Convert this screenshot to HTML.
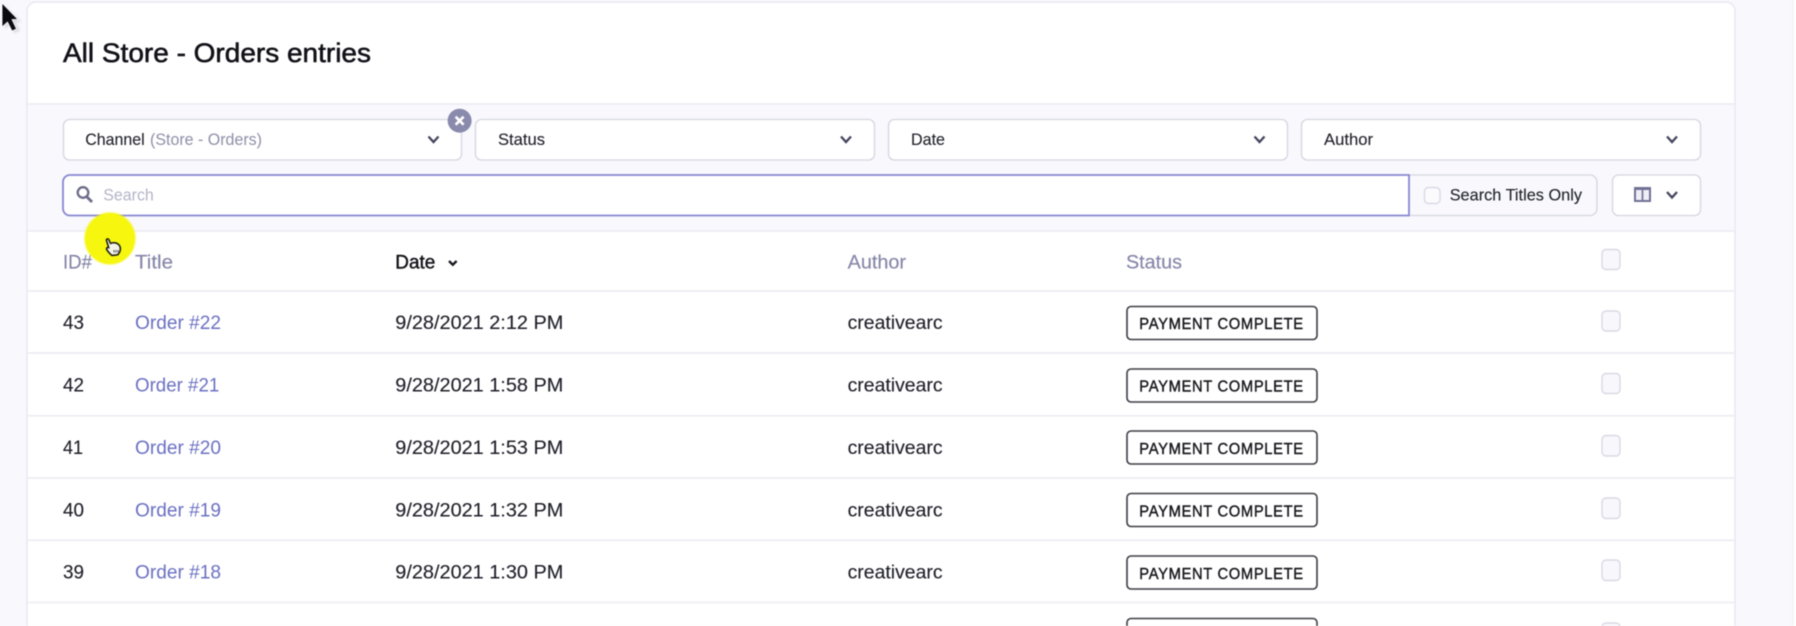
<!DOCTYPE html>
<html lang="en"><head><meta charset="utf-8"><title>All Store - Orders entries</title>
<style>
html,body{margin:0;padding:0;width:1796px;height:626px;overflow:hidden;background:#f9f9fd}
svg{display:block;filter:blur(.45px)}
text{font-family:"Liberation Sans",sans-serif;white-space:pre}
.t{font-size:19px;fill:#1e1e28;stroke:#1e1e28;stroke-width:.12px}
.l{font-size:19px;fill:#6b70c2}
.h{font-size:19px;fill:#8585a8;stroke:#8585a8;stroke-width:.15px}
.s{font-size:17px;fill:#20202a;stroke:#20202a;stroke-width:.1px}
.b{font-size:16px;fill:#17171c;stroke:#17171c;stroke-width:.4px;letter-spacing:.7px}
.bd{fill:#fff;stroke:#3c3c44;stroke-width:1.6}
.cb{fill:#f7f7fc;stroke:#d9d9e4;stroke-width:1.4}
.ln{stroke:#ebebf2;stroke-width:1.5}
.ch{fill:none;stroke:#45455f;stroke-width:2.300}
.sel{fill:#fff;stroke:#d5d5e0;stroke-width:1.300}
</style></head><body>
<svg width="1796" height="626" viewBox="0 0 1796 626" xmlns="http://www.w3.org/2000/svg">
<rect width="1796" height="626" fill="#f9f9fd"/>
<rect x="1793" width="3" height="626" fill="#fff"/>
<line x1="1793" y1="0" x2="1793" y2="626" stroke="#eeeef6"/>
<!-- card -->
<path d="M27 640V11a9 9 0 0 1 9-9H1726a9 9 0 0 1 9 9V640Z" fill="#fff" stroke="#e8e8f4" stroke-width="1.500"/>
<rect x="27.800" y="104" width="1706.500" height="127" fill="#f8f8fd"/>
<line class="ln" x1="27" y1="104" x2="1735" y2="104"/>
<line class="ln" x1="27" y1="231" x2="1735" y2="231"/>
<text x="63" y="62" font-size="27" fill="#111118" stroke="#111118" stroke-width=".55" textLength="308" lengthAdjust="spacingAndGlyphs">All Store - Orders entries</text>

<!-- selects -->
<rect class="sel" x="63.500" y="119.500" width="398" height="40.500" rx="6"/>
<rect class="sel" x="475.500" y="119.500" width="399" height="40.500" rx="6"/>
<rect class="sel" x="888.500" y="119.500" width="399" height="40.500" rx="6"/>
<rect class="sel" x="1301.500" y="119.500" width="399" height="40.500" rx="6"/>
<text class="s" x="85.300" y="145" textLength="59.400" lengthAdjust="spacingAndGlyphs">Channel</text>
<text x="150" y="145" font-size="17" fill="#8f8fa8" textLength="112" lengthAdjust="spacingAndGlyphs">(Store - Orders)</text>
<text class="s" x="498" y="145" textLength="47" lengthAdjust="spacingAndGlyphs">Status</text>
<text class="s" x="911" y="145" textLength="34" lengthAdjust="spacingAndGlyphs">Date</text>
<text class="s" x="1324" y="145" textLength="49" lengthAdjust="spacingAndGlyphs">Author</text>
<path class="ch" d="M428.500 136.500l5 5.500 5-5.500M841 136.500l5 5.500 5-5.500M1254.500 136.500l5 5.500 5-5.500M1667 136.500l5 5.500 5-5.500"/>
<circle cx="459.600" cy="120.700" r="12" fill="#8a8aad"/>
<path d="M455.600 116.700l8 8M463.600 116.700l-8 8" stroke="#fff" stroke-width="2.600" fill="none"/>

<!-- search row -->
<path d="M1409 175H1590a7 7 0 0 1 7 7v26.500a7 7 0 0 1-7 7H1409Z" fill="#f8f8fd" stroke="#d5d5e0" stroke-width="1.300"/>
<path d="M1409 175H70a7 7 0 0 0-7 7v26.500a7 7 0 0 0 7 7H1409Z" fill="#fff" stroke="#8787d2" stroke-width="1.800"/>
<circle cx="83" cy="192.500" r="5.300" fill="none" stroke="#6c6c88" stroke-width="2.300"/>
<path d="M87 197l5 5" stroke="#6c6c88" stroke-width="2.800" fill="none"/>
<text x="103.300" y="200.500" font-size="17" fill="#b4b4c8" textLength="50.500" lengthAdjust="spacingAndGlyphs">Search</text>
<rect class="cb" x="1424.500" y="187.500" width="15.500" height="16" rx="4" style="fill:#fbfbfe"/>
<text class="s" x="1449.700" y="200.500" textLength="132.300" lengthAdjust="spacingAndGlyphs">Search Titles Only</text>
<rect class="sel" x="1612.500" y="175" width="88" height="40.500" rx="6"/>
<rect x="1635" y="188" width="15" height="13" fill="#eeeef6" stroke="#717195" stroke-width="2"/>
<path d="M1642.500 188v13" stroke="#717195" stroke-width="1.700" fill="none"/>
<path d="M1634 188.500h17" stroke="#717195" stroke-width="3" fill="none"/>
<path class="ch" d="M1667 192l5 5.500 5-5.500"/>

<!-- table head -->
<line class="ln" x1="27" y1="291" x2="1735" y2="291"/>
<text class="h" x="63" y="268.500" textLength="29" lengthAdjust="spacingAndGlyphs">ID#</text>
<text class="h" x="135" y="268.500" textLength="38" lengthAdjust="spacingAndGlyphs">Title</text>
<text class="t" x="395.300" y="268.500" textLength="40" lengthAdjust="spacingAndGlyphs" style="stroke:#111118;fill:#111118;stroke-width:.4px">Date</text>
<path d="M449 261l3.800 3.800 3.800-3.800" fill="none" stroke="#15151c" stroke-width="2.300"/>
<text class="h" x="847.600" y="268.500" textLength="58.400" lengthAdjust="spacingAndGlyphs">Author</text>
<text class="h" x="1126" y="268.500" textLength="56" lengthAdjust="spacingAndGlyphs">Status</text>
<rect class="cb" x="1602" y="249.500" width="18" height="20" rx="4"/>

<!-- rows -->
<line class="ln" x1="27" y1="353" x2="1735" y2="353"/>
<line class="ln" x1="27" y1="415.700" x2="1735" y2="415.700"/>
<line class="ln" x1="27" y1="478" x2="1735" y2="478"/>
<line class="ln" x1="27" y1="540.300" x2="1735" y2="540.300"/>
<line class="ln" x1="27" y1="602.500" x2="1735" y2="602.500"/>

<text class="t" x="63" y="329" textLength="21" lengthAdjust="spacingAndGlyphs">43</text>
<text class="l" x="135" y="329" textLength="86" lengthAdjust="spacingAndGlyphs">Order #22</text>
<text class="t" x="395.300" y="329" textLength="168" lengthAdjust="spacingAndGlyphs">9/28/2021 2:12 PM</text>
<text class="t" x="847.600" y="329" textLength="95" lengthAdjust="spacingAndGlyphs">creativearc</text>
<rect class="bd" x="1127" y="306.500" width="190" height="33" rx="4"/>
<text class="b" x="1139.300" y="329" textLength="164.500" lengthAdjust="spacingAndGlyphs">PAYMENT COMPLETE</text>
<rect class="cb" x="1602" y="311" width="18" height="20" rx="4"/>

<text class="t" x="63" y="391.500" textLength="21" lengthAdjust="spacingAndGlyphs">42</text>
<text class="l" x="135" y="391.500" textLength="84.300" lengthAdjust="spacingAndGlyphs">Order #21</text>
<text class="t" x="395.300" y="391.500" textLength="168" lengthAdjust="spacingAndGlyphs">9/28/2021 1:58 PM</text>
<text class="t" x="847.600" y="391.500" textLength="95" lengthAdjust="spacingAndGlyphs">creativearc</text>
<rect class="bd" x="1127" y="369" width="190" height="33" rx="4"/>
<text class="b" x="1139.300" y="391.500" textLength="164.500" lengthAdjust="spacingAndGlyphs">PAYMENT COMPLETE</text>
<rect class="cb" x="1602" y="373.500" width="18" height="20" rx="4"/>

<text class="t" x="63" y="454" textLength="20" lengthAdjust="spacingAndGlyphs">41</text>
<text class="l" x="135" y="454" textLength="86" lengthAdjust="spacingAndGlyphs">Order #20</text>
<text class="t" x="395.300" y="454" textLength="168" lengthAdjust="spacingAndGlyphs">9/28/2021 1:53 PM</text>
<text class="t" x="847.600" y="454" textLength="95" lengthAdjust="spacingAndGlyphs">creativearc</text>
<rect class="bd" x="1127" y="431" width="190" height="33" rx="4"/>
<text class="b" x="1139.300" y="453.800" textLength="164.500" lengthAdjust="spacingAndGlyphs">PAYMENT COMPLETE</text>
<rect class="cb" x="1602" y="435.500" width="18" height="20.500" rx="4"/>

<text class="t" x="63" y="516.500" textLength="21" lengthAdjust="spacingAndGlyphs">40</text>
<text class="l" x="135" y="516.500" textLength="86" lengthAdjust="spacingAndGlyphs">Order #19</text>
<text class="t" x="395.300" y="516.500" textLength="168" lengthAdjust="spacingAndGlyphs">9/28/2021 1:32 PM</text>
<text class="t" x="847.600" y="516.500" textLength="95" lengthAdjust="spacingAndGlyphs">creativearc</text>
<rect class="bd" x="1127" y="493.500" width="190" height="33" rx="4"/>
<text class="b" x="1139.300" y="516.300" textLength="164.500" lengthAdjust="spacingAndGlyphs">PAYMENT COMPLETE</text>
<rect class="cb" x="1602" y="498" width="18" height="20.500" rx="4"/>

<text class="t" x="63" y="578.500" textLength="21" lengthAdjust="spacingAndGlyphs">39</text>
<text class="l" x="135" y="578.500" textLength="86" lengthAdjust="spacingAndGlyphs">Order #18</text>
<text class="t" x="395.300" y="578.500" textLength="168" lengthAdjust="spacingAndGlyphs">9/28/2021 1:30 PM</text>
<text class="t" x="847.600" y="578.500" textLength="95" lengthAdjust="spacingAndGlyphs">creativearc</text>
<rect class="bd" x="1127" y="556" width="190" height="33" rx="4"/>
<text class="b" x="1139.300" y="578.800" textLength="164.500" lengthAdjust="spacingAndGlyphs">PAYMENT COMPLETE</text>
<rect class="cb" x="1602" y="560" width="18" height="20.500" rx="4"/>

<rect class="bd" x="1127" y="618.500" width="190" height="33" rx="4"/>
<rect class="cb" x="1602" y="623" width="18" height="20.500" rx="4"/>

<!-- yellow highlight and hand cursor -->
<ellipse cx="110" cy="238.500" rx="25.500" ry="26" fill="#f6f60e" style="filter:blur(.8px)"/>
<path d="M108.500 247l-2-6.500c-.4-1.600 1.700-2.300 2.400-.7l1.700 3.700c1.800-1 5-1 7 .2 2 1.300 3 3.500 2.700 6-.3 2.200-1.300 3.800-2.500 5l-6 .8c-1.600-1.500-3.700-3.700-5-5.800-.9-1.600.7-2.800 2-1.900Z" fill="#f3f3ea" stroke="#1a1a12" stroke-width="1.500" stroke-linejoin="round"/>
<path d="M114 250v2.500M116 250v2.500M118 250v2.500" stroke="#444" stroke-width=".9"/>

<!-- arrow cursor -->
<path d="M5 6V29l5-4.500 4 8.500 6-2.500-4.500-8.500H21.500Z" fill="#b8b8c0" opacity=".5" style="filter:blur(1.200px)"/>
<path d="M2 3V27l5.500-5 4.500 9 4.500-2-4.500-9.500H18Z" fill="#0b0b0f" stroke="#fff" stroke-width=".8" stroke-linejoin="round"/>
</svg>
</body></html>
